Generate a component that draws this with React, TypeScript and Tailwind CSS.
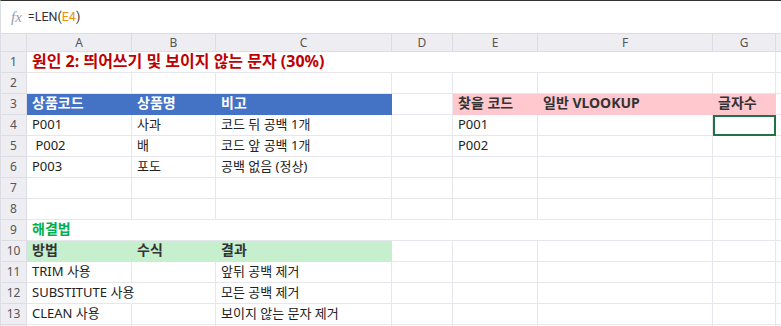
import React from 'react'

const FONT = { fontFamily: '"Noto Sans", "Noto Sans CJK KR", sans-serif' }

// column widths A..G, then the cut-off column H
const colW = ['w-[105px]', 'w-[84px]', 'w-[176px]', 'w-[61px]', 'w-[85px]', 'w-[175px]', 'w-[63px]']
const colNames = ['A', 'B', 'C', 'D', 'E', 'F', 'G']

type Cell = { text?: string; fill?: string; selected?: boolean; over?: boolean }

const blue = 'bg-[#4472c4] border-[#4472c4] text-white font-bold text-[14px]'
const pink = 'bg-[#ffc7ce] border-[#ffc7ce] text-[#333] font-bold text-[14px]'
const green = 'bg-[#c6efce] border-[#c6efce] text-[#333] font-bold text-[14px]'

const rows: { num: number; cells?: Cell[]; span?: { text: string; cls: string; cols: number } }[] = [
  { num: 1, span: { text: '원인 2: 띄어쓰기 및 보이지 않는 문자 (30%)', cls: 'text-[#c00000] font-bold text-[16px]', cols: 7 } },
  { num: 2, cells: [] },
  {
    num: 3,
    cells: [
      { text: '상품코드', fill: blue },
      { text: '상품명', fill: blue },
      { text: '비고', fill: blue },
      {},
      { text: '찾을 코드', fill: pink },
      { text: '일반 VLOOKUP', fill: pink },
      { text: '글자수', fill: pink },
    ],
  },
  { num: 4, cells: [{ text: 'P001' }, { text: '사과' }, { text: '코드 뒤 공백 1개' }, {}, { text: 'P001' }, {}, { selected: true }] },
  { num: 5, cells: [{ text: '\u00a0P002' }, { text: '배' }, { text: '코드 앞 공백 1개' }, {}, { text: 'P002' }] },
  { num: 6, cells: [{ text: 'P003' }, { text: '포도' }, { text: '공백 없음 (정상)' }] },
  { num: 7, cells: [] },
  { num: 8, cells: [] },
  { num: 9, span: { text: '해결법', cls: 'text-[#00b050] font-bold text-[14px]', cols: 6 } },
  {
    num: 10,
    cells: [{ text: '방법', fill: green }, { text: '수식', fill: green }, { text: '결과', fill: green }],
  },
  { num: 11, cells: [{ text: 'TRIM 사용' }, {}, { text: '앞뒤 공백 제거' }] },
  { num: 12, cells: [{ text: 'SUBSTITUTE 사용', over: true }, {}, { text: '모든 공백 제거' }] },
  { num: 13, cells: [{ text: 'CLEAN 사용' }, {}, { text: '보이지 않는 문자 제거' }] },
  { num: 14, cells: [] },
]

const RowHead = ({ n }: { n: number }) => (
  <div className="w-[26px] shrink-0 bg-[#eeeef2] border-r border-b border-[#dcdce4] flex items-center justify-center text-[12px] text-[#555]">
    {n}
  </div>
)

const GridCell = ({ w, cell }: { w: string; cell?: Cell }) => {
  const base = cell?.fill ?? 'border-[#e6e6ec] text-[#222] text-[13px]'
  return (
    <div
      className={`${w} shrink-0 h-full border-r border-b ${base} px-[5px] flex items-end pb-[1px] whitespace-pre ${
        cell?.over ? 'overflow-visible border-r-transparent' : 'overflow-hidden'
      } ${cell?.selected ? 'outline-2 outline-[#217346] -outline-offset-2' : ''}`}
    >
      {cell?.text}
    </div>
  )
}

export default function App() {
  return (
    <div className="w-[781px] h-[326px] overflow-hidden bg-white border-t border-[#333] border-l border-l-[#dcdce4]" style={FONT}>
      {/* formula bar */}
      <div className="h-[32px] flex items-center pl-[10px] gap-[6px]">
        <span className="italic text-[#9a9aa6] text-[15px]" style={{ fontFamily: '"Liberation Serif", serif' }}>
          fx
        </span>
        <span className="text-[12.5px] text-[#333]" style={{ fontFamily: 'Roboto, sans-serif' }}>
          =LEN(<span className="text-[#e8900c]">E4</span>)
        </span>
      </div>

      {/* column headers */}
      <div className="flex h-[19px] bg-[#eeeef2] border-t border-[#dcdce4]">
        <div className="w-[26px] shrink-0 border-r border-b border-[#dcdce4]" />
        {colNames.map((c, i) => (
          <div
            key={c}
            className={`${colW[i]} shrink-0 border-r border-b border-[#dcdce4] flex items-center justify-center text-[12px] text-[#555]`}
          >
            {c}
          </div>
        ))}
        <div className="flex-1 border-b border-[#dcdce4]" />
      </div>

      {/* rows */}
      {rows.map((r) => (
        <div key={r.num} className="flex h-[21px]">
          <RowHead n={r.num} />
          {r.span ? (
            <>
              <div
                className={`${r.span.cols === 7 ? 'w-[749px]' : 'w-[686px]'} shrink-0 border-r border-b border-[#e6e6ec] px-[5px] flex items-end pb-[1px] whitespace-nowrap overflow-visible leading-[20px] ${r.span.cls}`}
              >
                {r.span.text}
              </div>
              {r.span.cols === 6 && <GridCell w={colW[6]} />}
            </>
          ) : (
            colW.map((w, i) => <GridCell key={i} w={w} cell={r.cells?.[i]} />)
          )}
          <div className="flex-1 border-b border-[#e6e6ec]" />
        </div>
      ))}
    </div>
  )
}
